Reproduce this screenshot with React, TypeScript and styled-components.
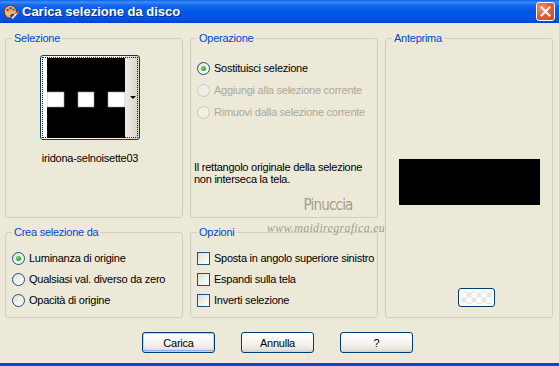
import React from 'react'
import styled, { createGlobalStyle } from 'styled-components'

const GlobalStyle = createGlobalStyle`
  html, body { margin: 0; padding: 0; background: #ECE9D8; }
  body { font-family: "Liberation Sans", Arial, sans-serif; font-size: 11px; letter-spacing: -0.25px; color: #000; }
`

const Window = styled.div`
  position: relative;
  width: 559px;
  height: 366px;
  box-sizing: border-box;
  display: flex;
  flex-direction: column;
  background: #ECE9D8;
  border-bottom: 3px solid #0B46D8;
  overflow: hidden;
`

const TitleBar = styled.div`
  height: 23px;
  flex: none;
  display: flex;
  align-items: center;
  padding: 0 4px 0 3px;
  background: linear-gradient(to bottom, #0B5FE8 0%, #3D8FF6 9%, #1768EB 22%, #0058E6 50%, #0055E2 80%, #0046C6 100%);
`

const TitleText = styled.span`
  flex: 1;
  margin-left: 3px;
  color: #fff;
  font-family: "Liberation Sans", Arial, sans-serif;
  font-weight: bold;
  font-size: 13px;
  letter-spacing: 0;
  text-shadow: 1px 1px 0 #0A2F8C;
`

const CloseButton = styled.div`
  width: 19px;
  height: 19px;
  box-sizing: border-box;
  display: flex;
  align-items: center;
  justify-content: center;
  border: 1px solid #fff;
  border-radius: 3px;
  background: radial-gradient(circle at 30% 30%, #F29476 0%, #E0603C 45%, #C9461F 100%);
`

const Body = styled.div`
  display: grid;
  grid-template-columns: 178px 188px 168px;
  grid-template-rows: 186px 92px;
  column-gap: 7px;
  row-gap: 8px;
  padding: 9px 0 0 5px;
`

const Group = styled.fieldset<{ $col: number; $row: string }>`
  margin: 0;
  padding: 0;
  min-width: 0;
  border: 1px solid #D0D0BF;
  border-radius: 3px;
  display: flex;
  flex-direction: column;
  grid-column: ${p => p.$col};
  grid-row: ${p => p.$row};
`

const Legend = styled.legend`
  margin-left: 6px;
  padding: 0 2px;
  color: #0046D5;
  line-height: 13px;
`

const SelContent = styled.div`
  display: flex;
  flex-direction: column;
  align-items: center;
  padding: 10px 8px 0 0;
`

const ThumbButton = styled.div`
  width: 100px;
  height: 85px;
  box-sizing: border-box;
  padding: 1px;
  border: 1px solid #003C74;
  border-radius: 3px;
  background: linear-gradient(to right, #FFFFFF 0%, #F6F5F1 80%, #D8D3C8 100%);
`

const FocusRect = styled.div`
  height: 100%;
  box-sizing: border-box;
  border: 1px dotted #1A1A1A;
  display: flex;
  align-items: center;
  padding-left: 4px;
`

const ArrowCell = styled.div`
  flex: 1;
  display: flex;
  justify-content: flex-end;
  padding-right: 1px;
  &::after {
    content: '';
    border-left: 3px solid transparent;
    border-right: 3px solid transparent;
    border-top: 3px solid #000;
  }
`

const FileName = styled.div`
  margin-top: 12px;
  line-height: 13px;
`

const OpContent = styled.div`
  display: flex;
  flex-direction: column;
  gap: 6px;
  padding: 15px 0 0 3px;
`

const Row = styled.label<{ $disabled?: boolean }>`
  height: 16px;
  display: flex;
  align-items: center;
  gap: 4px;
  padding-left: 3px;
  color: ${p => (p.$disabled ? '#ACA899' : '#000')};
  white-space: nowrap;
`

const Radio = styled.span<{ $checked?: boolean; $disabled?: boolean }>`
  width: 13px;
  height: 13px;
  box-sizing: border-box;
  flex: none;
  border-radius: 50%;
  border: 1px solid ${p => (p.$disabled ? '#CAC8BB' : '#1C5180')};
  background: ${p =>
    p.$disabled ? '#F1EFE5' : 'linear-gradient(135deg, #DCDBD2 0%, #F3F2EC 55%, #FFFFFF 100%)'};
  display: flex;
  align-items: center;
  justify-content: center;
  &::after {
    content: '';
    display: ${p => (p.$checked ? 'block' : 'none')};
    width: 5px;
    height: 5px;
    border-radius: 50%;
    background: radial-gradient(circle at 35% 35%, #6AE56A 0%, #2DAE2D 60%, #1E8E1E 100%);
  }
`

const Check = styled.span`
  width: 13px;
  height: 13px;
  box-sizing: border-box;
  flex: none;
  border: 1px solid #1C5180;
  background: linear-gradient(135deg, #DCDCD7 0%, #F2F2EE 55%, #FFFFFF 100%);
`

const Note = styled.p`
  margin: 35px 0 0;
  line-height: 12px;
  white-space: nowrap;
`

const ListContent = styled.div`
  display: flex;
  flex-direction: column;
  gap: 5px;
  padding: 11px 0 0 3px;
`

const PreviewContent = styled.div`
  display: flex;
  flex-direction: column;
  align-items: center;
`

const PreviewRect = styled.div`
  width: 141px;
  height: 46px;
  margin-top: 114px;
  background: #000;
`

const SmallButton = styled.div`
  align-self: flex-start;
  margin: 83px 0 0 72px;
  width: 37px;
  height: 19px;
  box-sizing: border-box;
  border: 1px solid #003C74;
  border-radius: 3px;
  background:
    repeating-conic-gradient(#E6E6E4 0% 25%, #FFFFFF 0% 50%) 50% 50% / 10px 10px,
    #fff;
  box-shadow: inset 0 0 0 2px #fff;
`

const ButtonBar = styled.div`
  display: flex;
  justify-content: center;
  gap: 26px;
  margin-top: 14px;
  padding-right: 4px;
`

const Button = styled.button<{ $default?: boolean }>`
  width: 73px;
  height: 21px;
  padding: 0;
  font: inherit;
  letter-spacing: inherit;
  color: #000;
  border: 1px solid #003C74;
  border-radius: 3px;
  background: linear-gradient(to bottom, #FFFFFF 0%, #F4F3EE 60%, #E3E0D6 90%, #D6D0C5 100%);
  box-shadow: ${p => (p.$default ? 'inset 0 0 0 1px #BCD4F6, inset 0 -1px 0 1px #89ADE4' : 'none')};
`

const Watermark = styled.div`
  position: absolute;
  left: 270px;
  top: 196px;
  width: 112px;
  display: flex;
  flex-direction: column;
  align-items: center;
  color: rgba(140, 136, 122, 0.8);
  pointer-events: none;
  letter-spacing: 0;
`

const WmName = styled.span`
  font-family: "DejaVu Sans", sans-serif;
  font-stretch: condensed;
  font-size: 15px;
  letter-spacing: -0.8px;
  margin-left: 4px;
`

const WmSite = styled.span`
  font-family: "Liberation Serif", serif;
  font-style: italic;
  font-size: 12px;
  letter-spacing: 0.3px;
  margin-top: 7px;
`

const AppIcon = () => (
  <svg width="16" height="16" viewBox="0 0 16 16">
    <path d="M7.5 1.5C3.8 1.5 1.2 4.1 1.2 7.5c0 3.4 2.6 6.6 5.8 6.6 1.4 0 1.6-1 1-1.8-.6-.8-.2-1.8 1-1.8h1.4c1.8 0 3-1.2 3-3C13.4 4 10.8 1.5 7.5 1.5z" fill="#E8B27A" stroke="#6E2F10" strokeWidth="1" />
    <circle cx="4.6" cy="6" r="1.3" fill="#E02828" />
    <circle cx="7.6" cy="4.3" r="1.3" fill="#2A5FE0" />
    <circle cx="10.6" cy="5.8" r="1.3" fill="#2AA034" />
    <circle cx="4.6" cy="9.6" r="1.3" fill="#F2D22A" />
    <path d="M9 14.5 L15 8" stroke="#FFFFFF" strokeWidth="1.6" />
    <path d="M13.5 9.5 L15.2 7.6" stroke="#D83A20" strokeWidth="1.8" />
  </svg>
)

const SelectionImage = () => (
  <svg width="78" height="80" viewBox="0 0 78 80">
    <rect width="78" height="80" fill="#000" />
    <rect x="0" y="34" width="17" height="15" fill="#fff" stroke="#9A9A9A" strokeWidth="0.6" />
    <rect x="31" y="34" width="16" height="15" fill="#fff" stroke="#9A9A9A" strokeWidth="0.6" />
    <rect x="61" y="34" width="17" height="15" fill="#fff" stroke="#9A9A9A" strokeWidth="0.6" />
  </svg>
)

export default function App() {
  return (
    <>
      <GlobalStyle />
      <Window>
        <TitleBar>
          <AppIcon />
          <TitleText>Carica selezione da disco</TitleText>
          <CloseButton>
            <svg width="11" height="11" viewBox="0 0 11 11">
              <path d="M1.5 1.5 L9.5 9.5 M9.5 1.5 L1.5 9.5" stroke="#fff" strokeWidth="2" strokeLinecap="square" />
            </svg>
          </CloseButton>
        </TitleBar>

        <Body>
          <Group $col={1} $row="1">
            <Legend>Selezione</Legend>
            <SelContent>
              <ThumbButton>
                <FocusRect>
                  <SelectionImage />
                  <ArrowCell />
                </FocusRect>
              </ThumbButton>
              <FileName>iridona-selnoisette03</FileName>
            </SelContent>
          </Group>

          <Group $col={2} $row="1">
            <Legend>Operazione</Legend>
            <OpContent>
              <Row>
                <Radio $checked />
                Sostituisci selezione
              </Row>
              <Row $disabled>
                <Radio $disabled />
                Aggiungi alla selezione corrente
              </Row>
              <Row $disabled>
                <Radio $disabled />
                Rimuovi dalla selezione corrente
              </Row>
              <Note>
                Il rettangolo originale della selezione
                <br />
                non interseca la tela.
              </Note>
            </OpContent>
          </Group>

          <Group $col={3} $row="1 / 3">
            <Legend>Anteprima</Legend>
            <PreviewContent>
              <PreviewRect />
              <SmallButton />
            </PreviewContent>
          </Group>

          <Group $col={1} $row="2">
            <Legend>Crea selezione da</Legend>
            <ListContent>
              <Row>
                <Radio $checked />
                Luminanza di origine
              </Row>
              <Row>
                <Radio />
                Qualsiasi val. diverso da zero
              </Row>
              <Row>
                <Radio />
                Opacità di origine
              </Row>
            </ListContent>
          </Group>

          <Group $col={2} $row="2">
            <Legend>Opzioni</Legend>
            <ListContent>
              <Row>
                <Check />
                Sposta in angolo superiore sinistro
              </Row>
              <Row>
                <Check />
                Espandi sulla tela
              </Row>
              <Row>
                <Check />
                Inverti selezione
              </Row>
            </ListContent>
          </Group>
        </Body>

        <ButtonBar>
          <Button $default>Carica</Button>
          <Button>Annulla</Button>
          <Button>?</Button>
        </ButtonBar>

        <Watermark>
          <WmName>Pinuccia</WmName>
          <WmSite>www.maidiregrafica.eu</WmSite>
        </Watermark>
      </Window>
    </>
  )
}
